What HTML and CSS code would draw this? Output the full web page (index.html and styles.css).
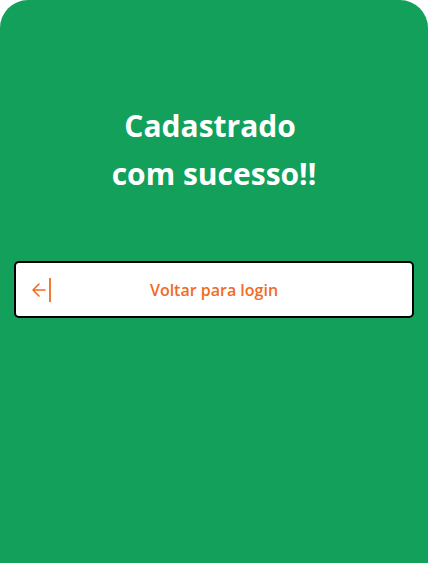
FILE: index.html
```html
<!DOCTYPE html>
<html lang="pt-BR">
<head>
<meta charset="utf-8">
<link rel="stylesheet" href="styles.css">
</head>
<body>
<main class="panel">
  <h1 class="title">Cadastrado&nbsp;<br>com sucesso!!</h1>
  <button class="back">
    <span class="back-icon">
      <svg width="24" height="26" viewBox="0 0 24 26" aria-hidden="true">
        <path d="M15 13H3M9 7L3 13L9 19" fill="none" stroke="#f26b21" stroke-width="1.6" stroke-linecap="round" stroke-linejoin="round"/>
        <path d="M20 1V25" stroke="#f26b21" stroke-width="1.8"/>
      </svg>
    </span>
    <span class="back-label">Voltar para login</span>
    <span></span>
  </button>
</main>
</body>
</html>
```

FILE: styles.css
```css
html, body {
  margin: 0;
  padding: 0;
  background: #ffffff;
}
body {
  font-family: "Open Sans", "Noto Sans", sans-serif;
}
.panel {
  box-sizing: border-box;
  height: 563px;
  background: #12a05b;
  border-radius: 28px 28px 0 0;
  padding: 102px 14px 0;
  display: flex;
  flex-direction: column;
}
.title {
  margin: 0 0 63px;
  text-align: center;
  color: #ffffff;
  font-size: 30px;
  font-weight: 700;
  line-height: 48px;
}
.back {
  box-sizing: border-box;
  width: 400px;
  height: 57px;
  margin: 0;
  padding: 1px 14px 0;
  background: #ffffff;
  border: 2px solid #000000;
  border-radius: 5px;
  display: grid;
  grid-template-columns: 1fr auto 1fr;
  align-items: center;
  font-family: inherit;
  cursor: pointer;
}
.back-icon {
  display: flex;
  align-items: center;
  justify-self: start;
}
.back-icon svg {
  display: block;
}
.back-label {
  color: #f26b21;
  font-size: 16px;
  font-weight: 600;
}
```
